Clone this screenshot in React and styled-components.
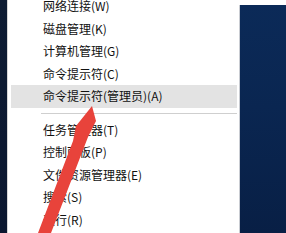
import React from "react";
import styled, { createGlobalStyle } from "styled-components";

const GlobalStyle = createGlobalStyle`
  html, body {
    margin: 0;
    padding: 0;
    background: #ffffff;
    overflow: hidden;
  }
  body {
    font-family: "Noto Sans CJK SC", "Liberation Sans", sans-serif;
  }
`;

export default function App() {
  const groups = [
    [
      { label: "网络连接(W)" },
      { label: "磁盘管理(K)" },
      { label: "计算机管理(G)" },
      { label: "命令提示符(C)" },
      { label: "命令提示符(管理员)(A)", active: true },
    ],
    [
      { label: "任务管理器(T)" },
      { label: "控制面板(P)" },
      { label: "文件资源管理器(E)" },
      { label: "搜索(S)" },
      { label: "运行(R)" },
    ],
  ];

  return (
    <Screen>
      <GlobalStyle />
      <LeftStrip />
      <Menu>
        {groups.map((group, gi) => (
          <React.Fragment key={gi}>
            {gi > 0 && <Separator />}
            {group.map((item, index) => (
              <Item key={index} $active={item.active}>
                {item.label}
              </Item>
            ))}
          </React.Fragment>
        ))}
      </Menu>
      <Desktop />
      <Arrow viewBox="0 0 286 233" width="286" height="233">
        <polygon
          points="92,106 96,121 88,137 51,233 38,233 73,141 76,126"
          fill="#e8433b"
        />
      </Arrow>
    </Screen>
  );
}

const Screen = styled.div`
  position: relative;
  display: flex;
  width: 286px;
  height: 233px;
  overflow: hidden;
  background: #ffffff;
`;

const LeftStrip = styled.div`
  width: 7px;
  flex-shrink: 0;
  background: linear-gradient(180deg, #0e1c33 0%, #0b1730 100%);
`;

const Menu = styled.div`
  width: 232px;
  flex-shrink: 0;
  display: flex;
  flex-direction: column;
  margin-top: -5px;
  padding: 0 2px 0 3px;
  box-sizing: border-box;
  background: #ffffff;
  border-left: 1px solid #d6d6d6;
`;

const Item = styled.div`
  height: 22.5px;
  line-height: 22.5px;
  padding-left: 32px;
  font-size: 12px;
  color: #111111;
  white-space: nowrap;
  background: ${(p) => (p.$active ? "#e3e3e3" : "transparent")};
`;

const Separator = styled.div`
  height: 11px;
  display: flex;
  align-items: center;
  padding-left: 30px;
  &::after {
    content: "";
    flex: 1;
    height: 1px;
    background: #cfcfcf;
  }
`;

const Desktop = styled.div`
  flex: 1;
  margin-top: 5px;
  border-left: 1px solid #c9ccd2;
  background: linear-gradient(180deg, #0b2a58 0%, #0a2651 45%, #081f45 100%);
`;

const Arrow = styled.svg`
  position: absolute;
  left: 0;
  top: 0;
  pointer-events: none;
`;
